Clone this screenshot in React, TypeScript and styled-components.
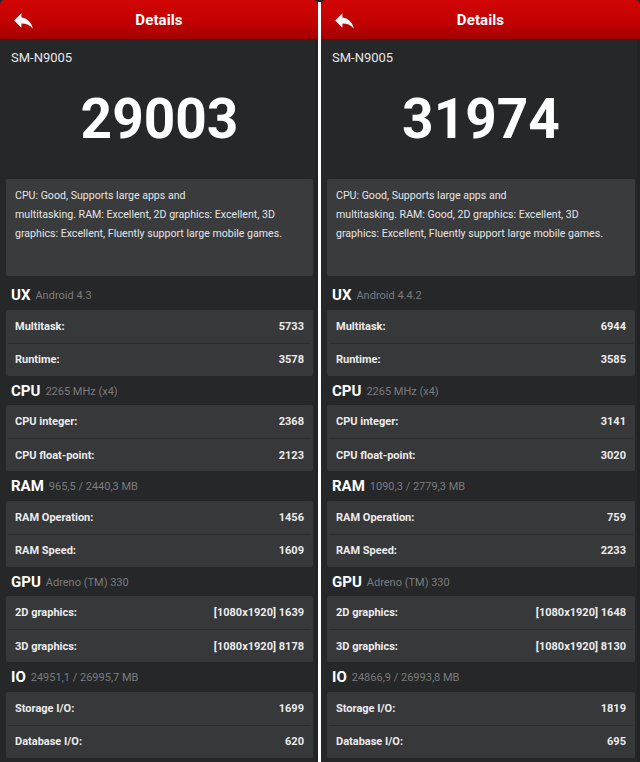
import React from "react";
import styled, { createGlobalStyle } from "styled-components";

const Global = createGlobalStyle`
  html, body { margin: 0; padding: 0; background: #1f1f21; }
  body { font-family: Roboto, "Noto Sans", "Liberation Sans", sans-serif; }
  * { box-sizing: border-box; }
`;

const Page = styled.div`
  width: 640px;
  height: 762px;
  overflow: hidden;
  display: grid;
  grid-template-columns: 318px 3px 1fr;
  background: #1f1f21;
`;

const Separator = styled.div`
  background: #ffffff;
  margin-top: 2px;
`;

const Panel = styled.div`
  display: flex;
  flex-direction: column;
  background: #262729;
  height: 762px;
  box-shadow: inset -3px 0 0 #222325;
`;

const Header = styled.div`
  height: 40px;
  flex: none;
  display: grid;
  grid-template-columns: 44px 1fr 44px;
  align-items: center;
  border-radius: 5px 5px 0 0;
  background: linear-gradient(#d20505 0%, #c20202 55%, #a50000 100%);
  border-bottom: 1px solid #7d0000;
`;

const BackButton = styled.div`
  display: flex;
  align-items: center;
  padding-left: 11px;
  padding-top: 1px;
`;

const Title = styled.div`
  text-align: center;
  color: #ffffff;
  font-weight: 700;
  font-size: 15px;
  letter-spacing: 0.1px;
  padding-top: 1px;
`;

const Body = styled.div`
  display: flex;
  flex-direction: column;
  padding: 0 5px 0 6px;
`;

const Model = styled.div`
  padding: 8px 5px 0;
  line-height: 20px;
  font-size: 13px;
  color: #e8e8e8;
`;

const Score = styled.div`
  margin-top: 19px;
  height: 64px;
  line-height: 64px;
  text-align: center;
  font-size: 55px;
  font-weight: 700;
  color: #ffffff;
`;

const Description = styled.div`
  margin-top: 28px;
  height: 97px;
  padding: 7px 9px 0;
  background: #3a3b3d;
  border-radius: 2px;
  font-size: 10.6px;
  line-height: 19px;
  color: #e6e6e6;
  margin-bottom: 4px;
`;

const SectionHead = styled.div`
  height: 29.5px;
  display: flex;
  align-items: center;
  gap: 5px;
  padding-left: 5px;
  padding-top: 1px;
`;

const SectionName = styled.span`
  font-size: 15px;
  font-weight: 700;
  color: #ffffff;
`;

const SectionInfo = styled.span`
  font-size: 11px;
  color: #7b7c7e;
  padding-top: 1px;
`;

const Box = styled.div`
  height: 66px;
  background: #37383a;
  border-radius: 2px;
  display: flex;
  flex-direction: column;
`;

const Row = styled.div<{ $first?: boolean }>`
  height: 33px;
  display: flex;
  align-items: center;
  justify-content: space-between;
  padding: 0 9px 0 9px;
  font-size: 11px;
  font-weight: 700;
  color: #ececec;
  ${(p) => (p.$first ? "" : "border-top: 1px solid #2b2c2e; margin: 0 2px; padding: 0 7px;")}
`;

const BackIcon = () => (
  <svg width="25" height="25" viewBox="0 0 24 24" fill="#ffffff">
    <path d="M10 9V5l-7 7 7 7v-4.1c5 0 8.5 1.6 11 5.1-1-5-4-10-11-11z" />
  </svg>
);

type Section = { name: string; info: string; rows: [string, string][] };
type PanelData = { score: string; lines: string[]; sections: Section[] };

const panels: PanelData[] = [
  {
    score: "29003",
    lines: [
      "CPU: Good, Supports large apps and",
      "multitasking. RAM: Excellent, 2D graphics: Excellent, 3D",
      "graphics: Excellent, Fluently support large mobile games.",
    ],
    sections: [
      { name: "UX", info: "Android 4.3", rows: [["Multitask:", "5733"], ["Runtime:", "3578"]] },
      { name: "CPU", info: "2265 MHz (x4)", rows: [["CPU integer:", "2368"], ["CPU float-point:", "2123"]] },
      { name: "RAM", info: "965,5 / 2440,3 MB", rows: [["RAM Operation:", "1456"], ["RAM Speed:", "1609"]] },
      { name: "GPU", info: "Adreno (TM) 330", rows: [["2D graphics:", "[1080x1920] 1639"], ["3D graphics:", "[1080x1920] 8178"]] },
      { name: "IO", info: "24951,1 / 26995,7 MB", rows: [["Storage I/O:", "1699"], ["Database I/O:", "620"]] },
    ],
  },
  {
    score: "31974",
    lines: [
      "CPU: Good, Supports large apps and",
      "multitasking. RAM: Good, 2D graphics: Excellent, 3D",
      "graphics: Excellent, Fluently support large mobile games.",
    ],
    sections: [
      { name: "UX", info: "Android 4.4.2", rows: [["Multitask:", "6944"], ["Runtime:", "3585"]] },
      { name: "CPU", info: "2265 MHz (x4)", rows: [["CPU integer:", "3141"], ["CPU float-point:", "3020"]] },
      { name: "RAM", info: "1090,3 / 2779,3 MB", rows: [["RAM Operation:", "759"], ["RAM Speed:", "2233"]] },
      { name: "GPU", info: "Adreno (TM) 330", rows: [["2D graphics:", "[1080x1920] 1648"], ["3D graphics:", "[1080x1920] 8130"]] },
      { name: "IO", info: "24866,9 / 26993,8 MB", rows: [["Storage I/O:", "1819"], ["Database I/O:", "695"]] },
    ],
  },
];

const DetailsPanel = ({ data }: { data: PanelData }) => (
  <Panel>
    <Header>
      <BackButton>
        <BackIcon />
      </BackButton>
      <Title>Details</Title>
      <div />
    </Header>
    <Body>
      <Model>SM-N9005</Model>
      <Score>{data.score}</Score>
      <Description>
        {data.lines.map((l, i) => (
          <div key={i}>{l}</div>
        ))}
      </Description>
      {data.sections.map((s) => (
        <React.Fragment key={s.name}>
          <SectionHead>
            <SectionName>{s.name}</SectionName>
            <SectionInfo>{s.info}</SectionInfo>
          </SectionHead>
          <Box>
            {s.rows.map(([k, v], i) => (
              <Row key={k} $first={i === 0}>
                <span>{k}</span>
                <span>{v}</span>
              </Row>
            ))}
          </Box>
        </React.Fragment>
      ))}
    </Body>
  </Panel>
);

export default function App() {
  return (
    <>
      <Global />
      <Page>
        <DetailsPanel data={panels[0]} />
        <Separator />
        <DetailsPanel data={panels[1]} />
      </Page>
    </>
  );
}
